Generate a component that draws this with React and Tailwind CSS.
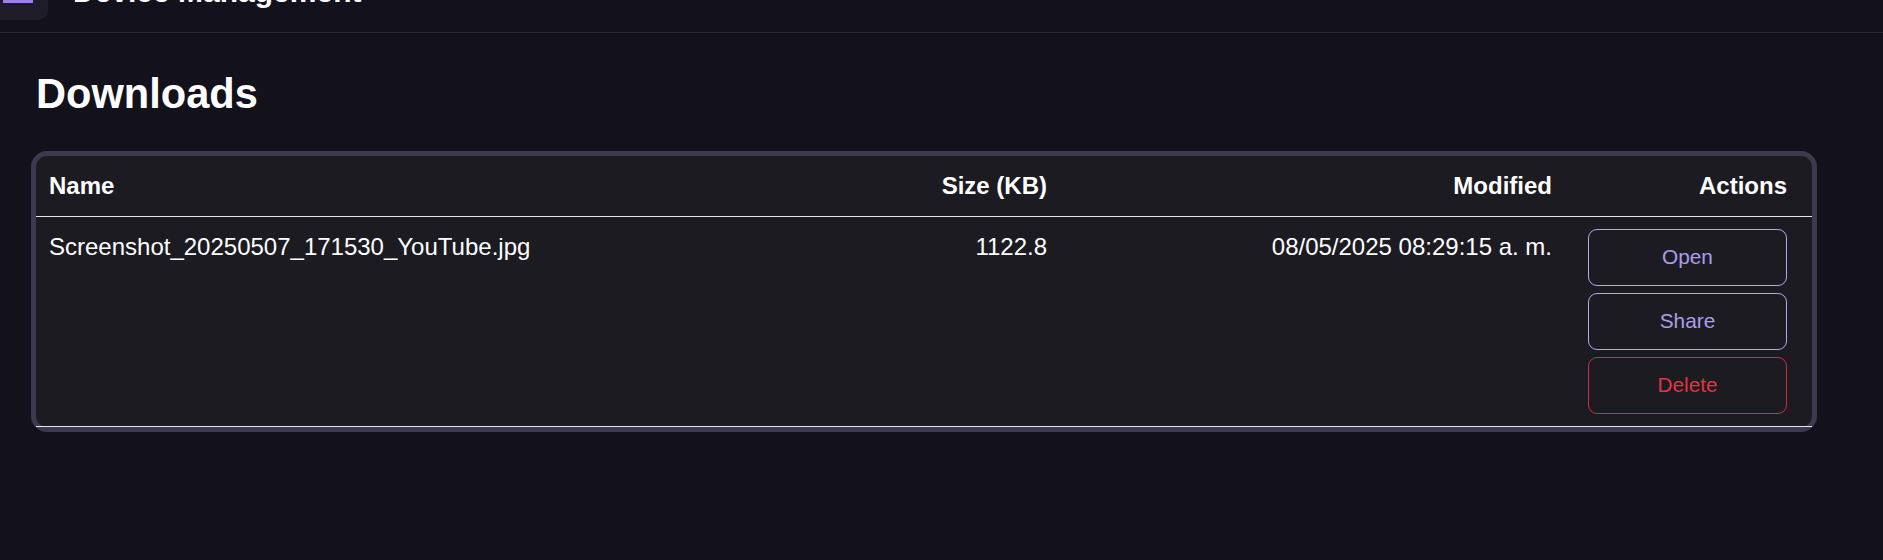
import React from 'react'

// Downloads list inside the device management screen (page scrolled a little).
const files = [
  {
    id: 1,
    name: 'Screenshot_20250507_171530_YouTube.jpg',
    size: '1122.8',
    modified: '08/05/2025 08:29:15 a. m.',
  },
]

function ActionButton({ children, tone = 'primary' }) {
  const cls =
    tone === 'danger'
      ? 'border-[#d22d3b] text-[#e0343f]'
      : 'border-[#b2a6ee] text-[#ab9eea]'
  return (
    <button
      type="button"
      className={`w-[199px] h-[57px] rounded-[9px] border bg-transparent text-[20.8px] leading-none ${cls}`}
    >
      {children}
    </button>
  )
}

export default function App() {
  return (
    <div
      className="min-h-[560px] bg-[#13111c] text-white overflow-hidden"
      style={{ fontFamily: '"Liberation Sans", Arial, sans-serif' }}
    >
      <div className="-mt-[48px]">
        {/* Top bar */}
        <header className="h-[81px] border-b border-[#2a2838] flex items-end">
          <div className="w-[48px] h-[40px] mb-[12px] rounded-r-[10px] bg-[#1e1c28] flex items-end px-[3px]">
            <div className="w-[30px] h-[3px] bg-[#9b80e8] mb-[17px]"></div>
          </div>
          <h2 className="ml-[25px] mb-[25px] text-[30px] font-bold leading-none whitespace-nowrap">
            Device Management
          </h2>
        </header>

        <main className="pl-[31px] pr-[66px] pt-[40px]">
          <h1 className="ml-[5px] text-[41.6px] font-bold leading-none">Downloads</h1>

          <div className="mt-[36px] rounded-[16px] border-[5px] border-[#3d394f] bg-[#1c1b22]">
            <table className="w-full table-fixed border-collapse text-[24px]">
              <colgroup>
                <col className="w-[724px]" />
                <col className="w-[300px]" />
                <col className="w-[505px]" />
                <col className="w-[247px]" />
              </colgroup>
              <thead>
                <tr className="h-[61px] border-b border-[#e6e6e6]">
                  <th className="text-left font-bold px-[13px]">Name</th>
                  <th className="text-right font-bold px-[13px]">Size (KB)</th>
                  <th className="text-right font-bold px-[13px]">Modified</th>
                  <th className="text-right font-bold pl-[10px] pr-[25px]">Actions</th>
                </tr>
              </thead>
              <tbody>
                {files.map(f => (
                  <tr key={f.id} className="border-b border-[#e6e6e6] align-top">
                    <td className="px-[13px] pt-[12px] leading-[1.5] whitespace-nowrap">{f.name}</td>
                    <td className="px-[13px] pt-[12px] leading-[1.5] text-right">{f.size}</td>
                    <td className="px-[13px] pt-[12px] leading-[1.5] text-right whitespace-nowrap">{f.modified}</td>
                    <td className="pl-[23px] pr-[25px] pt-[12px] pb-[12px]">
                      <div className="flex flex-col gap-[7px]">
                        <ActionButton>Open</ActionButton>
                        <ActionButton>Share</ActionButton>
                        <ActionButton tone="danger">Delete</ActionButton>
                      </div>
                    </td>
                  </tr>
                ))}
              </tbody>
            </table>
          </div>
        </main>
      </div>
    </div>
  )
}
